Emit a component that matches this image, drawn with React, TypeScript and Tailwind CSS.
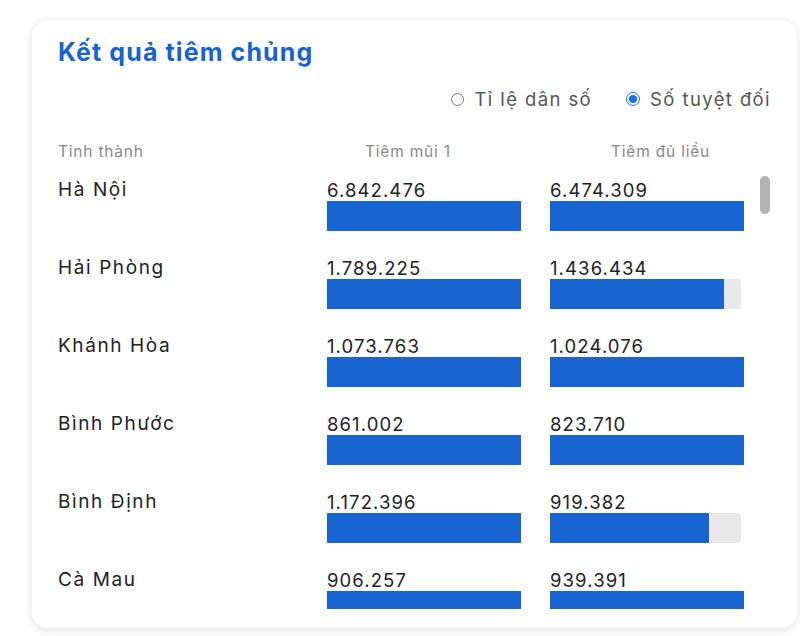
import React from 'react';

type Row = { name: string; dose1: string; full: string; w1: number; w2: number };

// bar widths in px, the longest bar fills 194px
const ROWS: Row[] = [
  { name: 'Hà Nội', dose1: '6.842.476', full: '6.474.309', w1: 194, w2: 194 },
  { name: 'Hải Phòng', dose1: '1.789.225', full: '1.436.434', w1: 194, w2: 174 },
  { name: 'Khánh Hòa', dose1: '1.073.763', full: '1.024.076', w1: 194, w2: 194 },
  { name: 'Bình Phước', dose1: '861.002', full: '823.710', w1: 194, w2: 194 },
  { name: 'Bình Định', dose1: '1.172.396', full: '919.382', w1: 194, w2: 159 },
  { name: 'Cà Mau', dose1: '906.257', full: '939.391', w1: 194, w2: 194 },
];

const Bar: React.FC<{ value: string; w: number }> = ({ value, w }) => (
  <div className="w-[194px]">
    <div className="text-[18.5px] leading-[22px] tracking-[1.1px] text-[#222]">{value}</div>
    <div className="h-[30px] w-[191px] rounded-r-[3px] bg-[#e8e8e8]">
      <div className="h-full bg-[#1864d0]" style={{ width: `${w}px` }} />
    </div>
  </div>
);

const App: React.FC = () => {
  return (
    <div className="h-[636px] w-[800px] bg-white pl-[32px] pt-[20px] font-['Inter','Open_Sans',sans-serif]">
      <div className="relative h-[608px] w-[765px] overflow-hidden rounded-[16px] bg-white shadow-[0_2px_10px_rgba(0,0,0,0.12)]">
        <h2 className="pl-[26px] pt-[17px] text-[25px] font-bold leading-[30px] tracking-[1.1px] text-[#1a63c9]">
          Kết quả tiêm chủng
        </h2>

        <div className="mt-[21px] flex justify-end gap-[34px] pr-[26px] text-[18.5px] leading-[22px] tracking-[1.4px] text-[#555]">
          <label className="flex items-center gap-[10px]">
            <span className="h-[13px] w-[13px] rounded-full border-[1.5px] border-[#777]" />
            Tỉ lệ dân số
          </label>
          <label className="flex items-center gap-[10px]">
            <span className="flex h-[14px] w-[14px] items-center justify-center rounded-full border-[1.5px] border-[#1a73e8]">
              <span className="h-[8px] w-[8px] rounded-full bg-[#1a73e8]" />
            </span>
            Số tuyệt đối
          </label>
        </div>

        <div className="mt-[32px] flex pl-[26px] text-[15.5px] leading-[20px] tracking-[0.8px] text-[#8a8a8a]">
          <div className="w-[307px]">Tỉnh thành</div>
          <div className="w-[246px]">Tiêm mũi 1</div>
          <div>Tiêm đủ liều</div>
        </div>

        <div className="mt-[17px] h-[430px] overflow-hidden pl-[26px]">
          {ROWS.map((r) => (
            <div key={r.name} className="flex h-[78px]">
              <div className="w-[269px] text-[19px] leading-[22px] tracking-[1.6px] text-[#222]">{r.name}</div>
              <Bar value={r.dose1} w={r.w1} />
              <div className="ml-[29px]">
                <Bar value={r.full} w={r.w2} />
              </div>
            </div>
          ))}
        </div>

        <div className="absolute left-[728px] top-[156px] h-[38px] w-[10px] rounded-full bg-[#b3b3b3]" />
      </div>
    </div>
  );
};

export default App;
